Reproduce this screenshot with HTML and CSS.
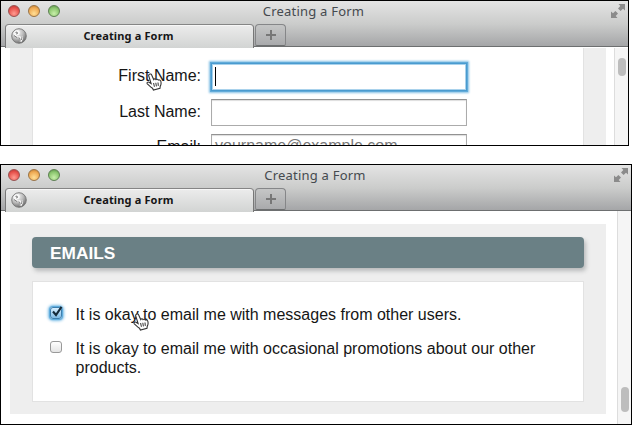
FILE: index.html
```html
<!DOCTYPE html>
<html lang="en">
<head>
<meta charset="utf-8">
<title>Creating a Form</title>
<link rel="stylesheet" href="styles.css">
</head>
<body>
<svg width="0" height="0" class="defs">
  <defs>
    <radialGradient id="ball" cx=".35" cy=".25" r=".8"><stop offset="0" stop-color="#fff"/><stop offset=".55" stop-color="#bbb"/><stop offset="1" stop-color="#666"/></radialGradient>
  </defs>
  <symbol id="globe" viewBox="0 0 16 16">
    <circle cx="8" cy="8" r="7.3" fill="url(#ball)" stroke="#777" stroke-width=".9"/>
    <path d="M2.2 5Q4 2 7 2L9 4 8 7 6 7 7 9 5 9 3 7Z" fill="#f7f7f7"/>
    <path d="M7 8.5 9 8 10 9 12 8.5 12 11 10.5 14 8.5 13.5 8.5 11Z" fill="#f7f7f7"/>
    <path d="M4.5 4.5 6 4 6.5 5.5 5 6M8 9.5 9 11 9 13.5M11 9 10.5 12M3 7.5 6 9.5" fill="none" stroke="#666" stroke-width=".8"/>
  </symbol>
  <symbol id="expand" viewBox="0 0 14 14">
    <path d="M7.5 0H14V6.5L12 4.7 9.6 7 7 4.4 9.3 2ZM0 7.5 2 9.3 4.4 7 7 9.6 4.7 12 6.5 14H0Z" fill="#8b8b8b"/>
  </symbol>
  <symbol id="hand" viewBox="0 0 18 19">
    <path d="M3.4 1.2C4.4.6 5.3 1.2 5.8 2.3L7.7 6.5C8.3 5.6 9.5 5.7 10 6.6 10.8 5.9 11.9 6.2 12.3 7.1 13.4 6.5 14.7 7.3 14.9 8.5 15.3 10.5 15.1 12 14.2 13.4L14 15.2 7.4 17 6.5 15.2C4.7 14.1 3.1 12.4 1.3 10.8.5 9.8 1.8 8.6 3 9.2L5.1 10.5 2.8 3.2C2.5 2.3 2.6 1.6 3.4 1.2Z" fill="#fff" stroke="#333" stroke-width="1.1"/>
    <path d="M7.6 10 8.4 13.8M9.8 9.8 10.4 13.4M12 9.5 12.3 12.9" stroke="#333" fill="none"/>
  </symbol>
</svg>

<section class="window first">
  <header class="chrome">
    <div class="titlebar">
      <span class="lights"><i class="red"></i><i class="amber"></i><i class="green"></i></span>
      <span class="title">Creating a Form</span>
      <svg class="expand"><use href="#expand"/></svg>
    </div>
    <div class="tabs">
      <div class="tab"><svg class="globe"><use href="#globe"/></svg><span>Creating a Form</span></div>
      <div class="newtab"></div>
    </div>
  </header>
  <div class="view">
    <main class="page">
      <div class="panel fields">
        <label class="row"><span>First Name:</span><span class="input focus"><i class="caret"></i></span></label>
        <label class="row"><span>Last Name:</span><span class="input"></span></label>
        <label class="row"><span>Email:</span><span class="input"><span class="hint">yourname@example.com</span></span></label>
      </div>
    </main>
    <div class="scroll"><i class="thumb"></i></div>
  </div>
  <svg class="hand"><use href="#hand"/></svg>
</section>

<section class="window second">
  <header class="chrome">
    <div class="titlebar">
      <span class="lights"><i class="red"></i><i class="amber"></i><i class="green"></i></span>
      <span class="title">Creating a Form</span>
      <svg class="expand"><use href="#expand"/></svg>
    </div>
    <div class="tabs">
      <div class="tab"><svg class="globe"><use href="#globe"/></svg><span>Creating a Form</span></div>
      <div class="newtab"></div>
    </div>
  </header>
  <div class="view">
    <main class="page">
      <h2>EMAILS</h2>
      <div class="panel choices">
        <div class="choice"><span class="box checked"><svg class="check" viewBox="0 0 12 12"><path d="M2 5.5 5 9 10.5 .8" fill="none" stroke="#152b3b" stroke-width="2.1"/></svg></span><span>It is okay to email me with messages from other users.</span></div>
        <div class="choice"><span class="box"></span><span>It is okay to email me with occasional promotions about our other<br>products.</span></div>
      </div>
    </main>
    <div class="scroll"><i class="thumb"></i></div>
  </div>
  <svg class="hand"><use href="#hand"/></svg>
</section>
</body>
</html>
```
FILE: styles.css
```css
* { box-sizing: border-box; }
body { margin: 0; width: 632px; height: 425px; overflow: hidden; background: #fff; font: 16px/19px "Liberation Sans", Arial, sans-serif; color: #161616; display: flex; flex-direction: column; gap: 18px; }
.defs { position: absolute; }
.window { position: relative; border: 1px solid #000; background: #fff; display: flex; flex-direction: column; overflow: hidden; }
.first { width: 629px; height: 146px; }
.second { width: 632px; height: 261px; }
.chrome { height: 46px; flex: none; background: linear-gradient(#e4e4e4, #cbcccb 50%, #a3a4a6); box-shadow: inset 0 -1px #6d6f70; }
.titlebar { height: 22px; display: grid; grid-template-columns: 80px 1fr 80px; align-items: center; }
.lights { display: flex; gap: 8px; padding-left: 7px; margin-top: -2px; }
.lights i { width: 12px; height: 12px; border-radius: 50%; border: 1px solid #777; }
.lights .red { background: radial-gradient(circle at 50% 75%, #ff9c91, #e7534d 60%, #b8302f); border-color: #985150; }
.lights .amber { background: radial-gradient(circle at 50% 75%, #ffdf96, #efab55 60%, #bd782a); border-color: #997346; }
.lights .green { background: radial-gradient(circle at 50% 75%, #c8efaa, #8bc66e 60%, #558a43); border-color: #5d8052; }
.title { justify-self: center; font: 13px/20px "Noto Sans", "Open Sans", sans-serif; letter-spacing: .22px; color: #454a4f; white-space: nowrap; margin: -2px 2px 0 0; }
.expand { width: 14px; height: 14px; justify-self: end; margin: -2px 3px 0 0; }
.tabs { height: 24px; display: flex; padding-top: 1px; padding-left: 4px; }
.tab { width: 249px; height: 24px; flex: none; border: 1px solid #777; border-top-color: #858585; border-bottom: 0; border-radius: 4px 4px 0 0; background: linear-gradient(#ececec, #d2d4d3); box-shadow: inset 0 1px #f7f7f7; display: flex; align-items: center; padding-left: 5px; position: relative; z-index: 1; }
.globe { width: 16px; height: 16px; flex: none; margin-top: -2px; }
.tab span { flex: 1; text-align: center; padding-right: 24px; margin: -1px 0 0 1px; font: bold 11px/18px "Noto Sans", "Open Sans", sans-serif; color: #161616; letter-spacing: .15px; white-space: nowrap; }
.newtab { width: 31px; height: 22px; margin-left: 1px; border: 1px solid #858688; border-bottom-color: #6d6f70; border-radius: 4px 4px 2px 2px; display: grid; place-items: center; background: linear-gradient(#c5c6c6, #a9aaac); }
.newtab::before { content: ""; width: 10px; height: 10px; background: linear-gradient(#777, #777) center / 10px 2px no-repeat, linear-gradient(#777, #777) center / 2px 10px no-repeat; }
.view { flex: 1; display: flex; justify-content: space-between; min-height: 0; overflow: hidden; }
.page { width: 596px; margin-left: 9px; background: #eee; padding: 0 22px; flex: none; }
.first .page, .first .scroll { margin-top: 1px; }
.panel { background: #fff; border: 1px solid #e2e2e2; }
.fields { height: 160px; border-top: 0; border-bottom: 0; padding-top: 15px; display: flex; flex-direction: column; gap: 8px; }
.row { display: flex; height: 28px; flex: none; }
.row > span:first-child { width: 168px; text-align: right; margin-right: 10px; line-height: 25px; }
.row:last-child { margin-top: -1px; }
.input { width: 256px; height: 27px; border: 1px solid #ababab; border-top-color: #929292; box-shadow: inset 0 1px 1px #ddd; padding: 0 3px; line-height: 24px; overflow: hidden; }
.input.focus { height: 28px; border: 1px solid #4a9bcf; box-shadow: 0 0 0 1px #62abd9, 0 0 2px 2px #85c1e5, inset 0 0 0 1px #a9d2ec; }
.caret { display: block; width: 1px; height: 19px; margin-top: 3px; background: #000; }
.hint { display: block; margin-top: -1px; color: #777; }
.scroll { width: 14px; flex: none; background: #f5f5f5; border-left: 1px solid #ddd; padding: 10px 0 0 3px; }
.thumb { display: block; width: 8px; height: 18px; border-radius: 4px; background: #bdbdbd; }
.second .page { margin-top: 13px; height: 190px; padding-top: 13px; }
h2 { margin: 0 0 13px; height: 31px; width: 552px; border-radius: 4px; background: #6a8085; box-shadow: 2px 3px 4px #b8babb; color: #fff; font: bold 17.3px/32px "Liberation Sans", Arial, sans-serif; padding-left: 18px; }
.choices { height: 121px; padding: 23px 17px 0; display: flex; flex-direction: column; gap: 15px; }
.choice { display: flex; gap: 13.5px; white-space: nowrap; }
.box { width: 12px; height: 12px; margin-top: 2px; flex: none; border: 1px solid #999; border-radius: 3px; background: linear-gradient(#fff, #e4e4e4); }
.checked { border-color: #3d7fae; background: linear-gradient(#d8efff, #7fbbe5); box-shadow: 0 0 1px 1px #5ba9db, 0 0 3px 2px #81c0e8; }
.check { display: block; width: 12px; height: 12px; margin: -2px 0 0 0; overflow: visible; }
.second .scroll { padding-top: 176px; }
.second .thumb { height: 25px; }
.hand { position: absolute; width: 18px; height: 19px; left: 145px; top: 72px; }
.second .hand { left: 132px; top: 148px; }
```
